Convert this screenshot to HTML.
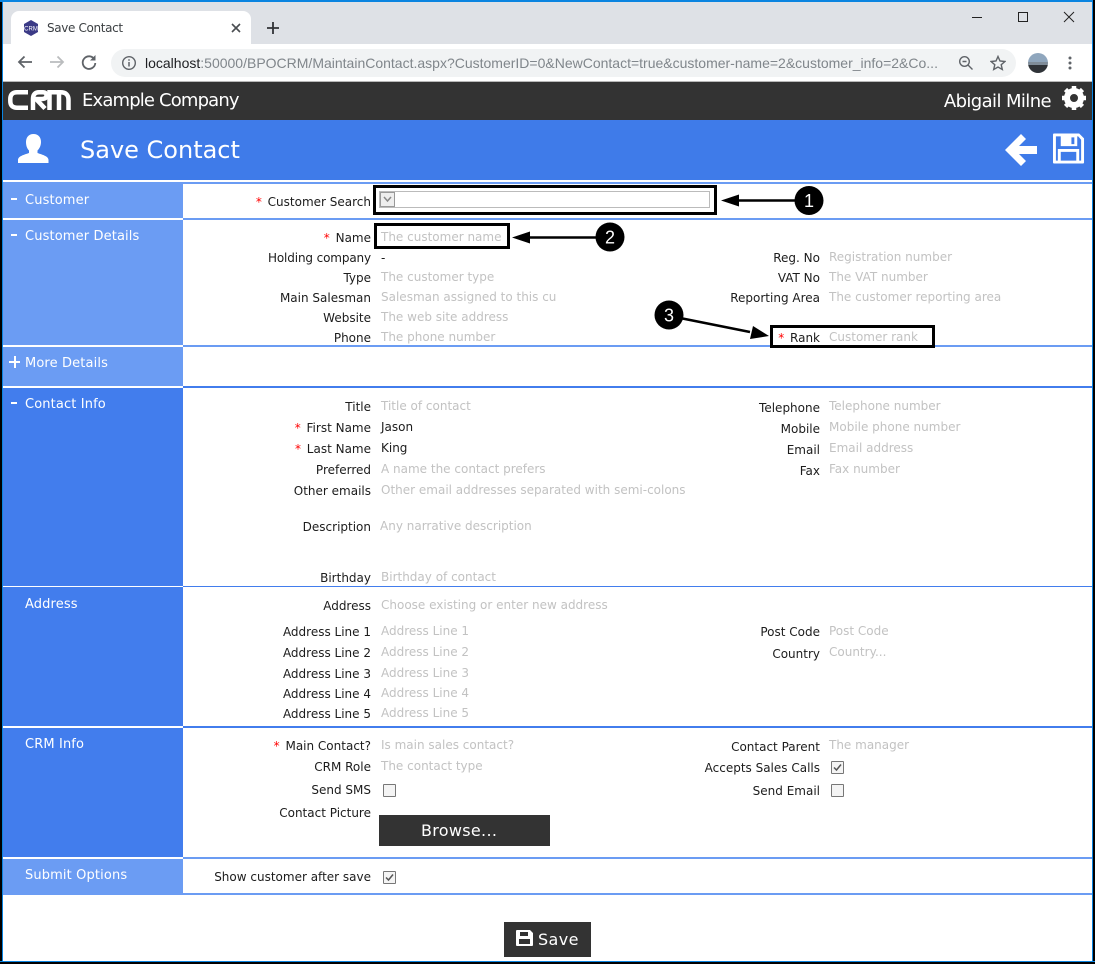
<!DOCTYPE html>
<html><head><meta charset="utf-8"><title>Save Contact</title>
<style>
html,body{margin:0;padding:0;background:#fff}
#p{position:relative;width:1095px;height:964px;overflow:hidden;background:#fff;font-family:"DejaVu Sans","Liberation Sans",sans-serif;font-size:12px;color:#1c1c1c}
#p div,#p span.a,#p svg{position:absolute}
.l{right:724px;margin-top:1px;height:16px;line-height:16px;white-space:nowrap;text-align:right;color:#1c1c1c}
.r{right:275px;margin-top:1px;height:16px;line-height:16px;white-space:nowrap;text-align:right;color:#1c1c1c}
.v{left:381px;margin-top:1px;height:16px;line-height:16px;white-space:nowrap;color:#c2c2c2}
.w{left:829px;margin-top:1px;height:16px;line-height:16px;white-space:nowrap;color:#c2c2c2}
.k{color:#1c1c1c}
i{font-style:normal;color:#f00;margin-right:2px}
.s{left:3px;width:180px}
.d{background:#427ded}.e{background:#6b9cf3}
.t{left:25px;margin-top:2px;color:#fff;font-size:13px;letter-spacing:.13px;height:16px;line-height:16px;white-space:nowrap}
.h{left:183px;right:3px;height:2px}
.bx{width:11px;height:11px;border:1px solid #777;background:#f4f4f4;border-radius:1px}
.m{left:11px;width:6px;height:2px;background:#fff}
.box{border:3px solid #000;box-sizing:border-box}
</style></head><body><div id="p">
<!-- chrome -->
<div style="left:0;top:0;width:1095px;height:44px;background:#dee1e6"></div>
<div style="left:11px;top:11px;width:240px;height:34px;background:#fff;border-radius:8px 8px 0 0"></div>
<svg style="left:22px;top:19px" width="18" height="18" viewBox="0 0 18 18"><path d="M9 1l7 4v8l-7 4-7-4V5z" fill="#3b3a86"/><text x="9" y="11.500" font-size="6" fill="#fff" text-anchor="middle" font-family="Liberation Sans">CRM</text></svg>
<div style="left:47px;top:20px;font:12px/16px 'DejaVu Sans',sans-serif;letter-spacing:-.35px;color:#3c4043;white-space:nowrap">Save Contact</div>
<svg style="left:230px;top:22px" width="12" height="12" viewBox="0 0 12 12"><path d="M2 2l8 8M10 2l-8 8" stroke="#4a4d51" stroke-width="1.600"/></svg>
<svg style="left:266px;top:21px" width="14" height="14" viewBox="0 0 14 14"><path d="M7 1v12M1 7h12" stroke="#303236" stroke-width="1.800"/></svg>
<svg style="left:972px;top:11px" width="104" height="12" viewBox="0 0 104 12"><path d="M0 6.500h10" stroke="#222" stroke-width="1"/><rect x="46.500" y="1.500" width="9" height="9" fill="none" stroke="#222"/><path d="M92 1l10 10M102 1l-10 10" stroke="#222" stroke-width="1"/></svg>
<div style="left:0;top:44px;width:1095px;height:37px;background:#fff"></div>
<div style="left:0;top:81px;width:1095px;height:1px;background:#b8b8b8"></div>
<svg style="left:16px;top:53px" width="18" height="18" viewBox="0 0 18 18"><path d="M16 9H3M8.500 3.500L3 9l5.500 5.500" fill="none" stroke="#5f6368" stroke-width="1.800"/></svg>
<svg style="left:48px;top:53px" width="18" height="18" viewBox="0 0 18 18"><path d="M2 9h13M9.500 3.500L15 9l-5.500 5.500" fill="none" stroke="#babcbe" stroke-width="1.800"/></svg>
<svg style="left:80px;top:53px" width="18" height="18" viewBox="0 0 18 18"><path d="M14.500 6.500A6.300 6.300 0 1 0 15.300 10" fill="none" stroke="#5f6368" stroke-width="1.800"/><path d="M15.500 2v5.500H10z" fill="#5f6368"/></svg>
<div style="left:111px;top:49px;width:905px;height:28px;border-radius:14px;background:#f1f3f4"></div>
<svg style="left:121px;top:55px" width="16" height="16" viewBox="0 0 16 16"><circle cx="8" cy="8" r="6.300" fill="none" stroke="#5f6368" stroke-width="1.400"/><path d="M8 7v4.500M8 4.300v1.500" stroke="#5f6368" stroke-width="1.500"/></svg>
<div style="left:145px;top:54px;font:14px/18px 'Liberation Sans',sans-serif;letter-spacing:0;color:#80868b;white-space:nowrap"><span style="color:#202124">localhost</span>:50000/BPOCRM/MaintainContact.aspx?CustomerID=0&amp;NewContact=true&amp;customer-name=2&amp;customer_info=2&amp;Co...</div>
<svg style="left:958px;top:55px" width="16" height="16" viewBox="0 0 16 16"><circle cx="6.500" cy="6.500" r="4.800" fill="none" stroke="#5f6368" stroke-width="1.400"/><path d="M10 10l4.500 4.500M4.500 6.500h4" stroke="#5f6368" stroke-width="1.400"/></svg>
<svg style="left:990px;top:55px" width="16" height="16" viewBox="0 0 16 16"><path d="M8 1.500l2 4.500 4.900.5-3.700 3.200 1.100 4.800L8 12l-4.300 2.500 1.100-4.800L1.100 6.500 6 6z" fill="none" stroke="#5f6368" stroke-width="1.400"/></svg>
<svg style="left:1028px;top:53px" width="20" height="20" viewBox="0 0 20 20"><defs><clipPath id="c"><circle cx="10" cy="10" r="10"/></clipPath></defs><g clip-path="url(#c)"><rect width="20" height="9" fill="#8fa6bd"/><rect y="9" width="20" height="3" fill="#7f8c99"/><rect y="12" width="20" height="8" fill="#2f3338"/></g></svg>
<svg style="left:1067px;top:55px" width="6" height="16" viewBox="0 0 6 16"><circle cx="3" cy="3" r="1.500" fill="#5f6368"/><circle cx="3" cy="8" r="1.500" fill="#5f6368"/><circle cx="3" cy="13" r="1.500" fill="#5f6368"/></svg>
<!-- dark header -->
<div style="left:0;top:82px;width:1095px;height:38px;background:#333"></div>
<svg style="left:8px;top:90px" width="63" height="20" viewBox="0 0 63 20"><g fill="none" stroke="#fff" stroke-width="4.500"><path d="M20 2.300H9Q2.300 2.300 2.300 9v2Q2.300 17.700 9 17.700h11"/><path d="M25 20V9q0-6.700 6-6.700h4q3.500 0 3.500 3.200T34 9h-6l9 9.500"/><path d="M41.500 20V2.300h11q8 0 8 7.700v10M51 2.300V20"/></g></svg>
<div style="left:82px;top:89px;font-size:18px;line-height:24px;color:#fff;white-space:nowrap;letter-spacing:-.85px">Example Company</div>
<div style="right:44px;top:90px;font-size:18px;line-height:24px;color:#fff;white-space:nowrap;letter-spacing:-.6px">Abigail Milne</div>
<svg style="left:1061px;top:85px" width="26" height="26" viewBox="0 0 26 26"><circle cx="13" cy="13" r="7" fill="none" stroke="#fff" stroke-width="6"/><path d="M13 1v24M1 13h24M4.500 4.500l17 17M21.500 4.500l-17 17" stroke="#fff" stroke-width="4.500" stroke-dasharray="4.500 15 4.500"/></svg>
<!-- blue title -->
<div style="left:0;top:120px;width:1095px;height:60px;background:#3f7be9"></div>
<svg style="left:18px;top:134px" width="31" height="29" viewBox="0 0 31 29"><path d="M15.500 0c5 0 7.500 3.500 7.500 8 0 3.500-1.500 6.500-3.500 8.500v2.500c4 1.500 11 3 11 7V29H0v-3c0-4 7-5.500 11-7v-2.500C9 14.500 8 11.500 8 8c0-4.500 2.500-8 7.500-8z" fill="#fff"/></svg>
<div style="left:80px;top:134px;font-size:24px;line-height:32px;color:#fff;white-space:nowrap">Save Contact</div>
<svg style="left:1005px;top:134px" width="32" height="32" viewBox="0 0 32 32"><path d="M16 0l5 5-7 7h18v8H14l7 7-5 5L0 16z" fill="#fff"/></svg>
<svg style="left:1053px;top:133px" width="32" height="31" viewBox="0 0 33 31"><path fill-rule="evenodd" d="M1 0h26l5 5v25a1 1 0 0 1-1 1H1a1 1 0 0 1-1-1V1a1 1 0 0 1 1-1zM3 3v25h2V16h22v12h2V6.500L26 3h-1v10H8V3zM8 19v9h16v-9zM19 4v7h3V4z" fill="#fff"/></svg>
<!-- frame -->
<div style="left:0;top:0;width:2px;height:964px;background:#000;z-index:9"></div>
<div style="left:2px;top:0;width:1px;height:964px;background:#0a84e0;z-index:9"></div>
<div style="left:0;top:0;width:1095px;height:2px;background:#0a84e0;z-index:9"></div>
<div style="right:0;top:0;width:2px;height:964px;background:#000;z-index:9"></div>
<div style="right:2px;top:0;width:1px;height:964px;background:#0a84e0;z-index:9"></div>
<div style="left:0;top:962px;width:1095px;height:2px;background:#000;z-index:9"></div>
<div style="left:0;top:961px;width:1095px;height:1px;background:#0a84e0;z-index:9"></div>
<!-- section lines -->
<div style="left:3px;right:3px;top:182px;height:2px;background:#6b9cf3"></div>
<div class="h e" style="top:218px"></div>
<div class="h e" style="top:345px"></div>
<div class="h d" style="top:386px"></div>
<div class="h d" style="top:586px;height:1px"></div>
<div class="h d" style="top:726px"></div>
<div class="h e" style="top:857px"></div>
<div class="h e" style="top:893px"></div>
<!-- left blocks -->
<div class="s e" style="top:184px;height:34px"></div>
<div class="s e" style="top:220px;height:125px"></div>
<div class="s e" style="top:347px;height:39px"></div>
<div class="s d" style="top:388px;height:198px"></div>
<div class="s d" style="top:587px;height:139px"></div>
<div class="s d" style="top:728px;height:129px"></div>
<div class="s e" style="top:859px;height:36px"></div>
<div class="m" style="top:198px"></div><div class="t" style="top:191px">Customer</div>
<div class="m" style="top:234px"></div><div class="t" style="top:227px">Customer Details</div>
<div class="m" style="top:361px;width:11px;left:9px"></div><div class="m" style="left:13.500px;top:356px;width:2px;height:12px"></div><div class="t" style="top:354px">More Details</div>
<div class="m" style="top:402px"></div><div class="t" style="top:395px">Contact Info</div>
<div class="t" style="top:595px">Address</div>
<div class="t" style="top:735px">CRM Info</div>
<div class="t" style="top:866px">Submit Options</div>
<!-- customer -->
<div class="l" style="top:193px"><i>*</i> Customer Search</div>
<div style="left:379px;top:191px;width:331px;height:17px;border:1px solid #bbb;box-sizing:border-box"></div>
<div style="left:380px;top:192px;width:15px;height:15px;background:#eee;border:1px solid #999;box-sizing:border-box"></div>
<svg style="left:383px;top:196px" width="9" height="7" viewBox="0 0 9 7"><path d="M1 1l3.500 4L8 1" fill="none" stroke="#888" stroke-width="1.500"/></svg>
<!-- details -->
<div class="l" style="top:229px"><i>*</i> Name</div><div class="v" style="top:228px">The customer name</div>
<div class="l" style="top:249px;letter-spacing:-.13px">Holding company</div><div class="v k" style="top:249px">-</div>
<div class="l" style="top:269px">Type</div><div class="v" style="top:268px">The customer type</div>
<div class="l" style="top:289px">Main Salesman</div><div class="v" style="top:288px">Salesman assigned to this cu</div>
<div class="l" style="top:309px">Website</div><div class="v" style="top:308px">The web site address</div>
<div class="l" style="top:329px">Phone</div><div class="v" style="top:328px">The phone number</div>
<div class="r" style="top:249px">Reg. No</div><div class="w" style="top:248px">Registration number</div>
<div class="r" style="top:269px">VAT No</div><div class="w" style="top:268px">The VAT number</div>
<div class="r" style="top:289px">Reporting Area</div><div class="w" style="top:288px">The customer reporting area</div>
<div class="r" style="top:329px"><i>*</i> Rank</div><div class="w" style="top:328px">Customer rank</div>
<!-- contact -->
<div class="l" style="top:398px">Title</div><div class="v" style="top:397px">Title of contact</div>
<div class="l" style="top:419px"><i>*</i> First Name</div><div class="v k" style="top:418px">Jason</div>
<div class="l" style="top:440px"><i>*</i> Last Name</div><div class="v k" style="top:439px">King</div>
<div class="l" style="top:461px">Preferred</div><div class="v" style="top:460px">A name the contact prefers</div>
<div class="l" style="top:482px">Other emails</div><div class="v" style="top:481px">Other email addresses separated with semi-colons</div>
<div class="l" style="top:518px">Description</div><div class="v" style="top:517px;left:380px">Any narrative description</div>
<div class="l" style="top:569px">Birthday</div><div class="v" style="top:568px">Birthday of contact</div>
<div class="r" style="top:399px">Telephone</div><div class="w" style="top:397px">Telephone number</div>
<div class="r" style="top:420px">Mobile</div><div class="w" style="top:418px">Mobile phone number</div>
<div class="r" style="top:441px">Email</div><div class="w" style="top:439px">Email address</div>
<div class="r" style="top:462px">Fax</div><div class="w" style="top:460px">Fax number</div>
<!-- address -->
<div class="l" style="top:597px">Address</div><div class="v" style="top:596px">Choose existing or enter new address</div>
<div class="l" style="top:623px">Address Line 1</div><div class="v" style="top:622px">Address Line 1</div>
<div class="l" style="top:644px">Address Line 2</div><div class="v" style="top:643px">Address Line 2</div>
<div class="l" style="top:665px">Address Line 3</div><div class="v" style="top:664px">Address Line 3</div>
<div class="l" style="top:685px">Address Line 4</div><div class="v" style="top:684px">Address Line 4</div>
<div class="l" style="top:705px">Address Line 5</div><div class="v" style="top:704px">Address Line 5</div>
<div class="r" style="top:623px">Post Code</div><div class="w" style="top:622px">Post Code</div>
<div class="r" style="top:645px">Country</div><div class="w" style="top:643px">Country...</div>
<!-- crm -->
<div class="l" style="top:737px"><i>*</i> Main Contact?</div><div class="v" style="top:736px">Is main sales contact?</div>
<div class="l" style="top:758px">CRM Role</div><div class="v" style="top:757px">The contact type</div>
<div class="l" style="top:781px">Send SMS</div><div class="bx" style="left:383px;top:784px"></div>
<div class="l" style="top:804px">Contact Picture</div>
<div style="left:379px;top:815px;width:171px;height:31px;background:#333;color:#fff;font-size:16px;letter-spacing:.3px;line-height:31px;white-space:nowrap"><span style="margin-left:42px">Browse...</span></div>
<div class="r" style="top:738px">Contact Parent</div><div class="w" style="top:736px">The manager</div>
<div class="r" style="top:759px">Accepts Sales Calls</div><div class="bx" style="left:831px;top:761px"></div>
<svg style="left:832px;top:762px" width="11" height="11" viewBox="0 0 11 11"><path d="M2 5.500l2.500 2.500L9 2.500" fill="none" stroke="#555" stroke-width="1.500"/></svg>
<div class="r" style="top:782px">Send Email</div><div class="bx" style="left:831px;top:784px"></div>
<!-- submit -->
<div class="l" style="top:868px">Show customer after save</div><div class="bx" style="left:383px;top:871px"></div>
<svg style="left:384px;top:872px" width="11" height="11" viewBox="0 0 11 11"><path d="M2 5.500l2.500 2.500L9 2.500" fill="none" stroke="#555" stroke-width="1.500"/></svg>
<div style="left:504px;top:922px;width:87px;height:35px;background:#333"></div>
<svg style="left:516px;top:930px" width="17" height="16" viewBox="0 0 17 16"><path fill-rule="evenodd" d="M1 0h13l3 3v12a1 1 0 0 1-1 1H1a1 1 0 0 1-1-1V1a1 1 0 0 1 1-1zM4 2v4h8V2zM3 9v5h11V9z" fill="#fff"/></svg>
<div style="left:538px;top:930px;font-size:16px;letter-spacing:.4px;line-height:20px;color:#fff;white-space:nowrap">Save</div>
<!-- annotations -->
<div class="box" style="left:373px;top:185px;width:344px;height:30px;z-index:5"></div>
<div class="box" style="left:374px;top:223px;width:136px;height:26px;z-index:5"></div>
<div class="box" style="left:770px;top:325px;width:165px;height:23px;z-index:5"></div>
<svg style="left:0;top:0;z-index:6" width="1095" height="964" viewBox="0 0 1095 964">
<path d="M738 200.500h62" stroke="#000" stroke-width="2.500"/><path d="M721 200.500l18-6v12z" fill="#000"/>
<path d="M530 237.500h70" stroke="#000" stroke-width="2.500"/><path d="M512 237.500l18-6v12z" fill="#000"/>
<path d="M680 318l70 14" stroke="#000" stroke-width="2.500"/><path d="M769 336l-19 3 3-13z" fill="#000"/>
<circle cx="809" cy="200.500" r="14.500" fill="#000"/><circle cx="610" cy="237" r="14.500" fill="#000"/><circle cx="669" cy="315" r="14.500" fill="#000"/>
<text x="809" y="207" fill="#fff" font-size="18" text-anchor="middle" font-family="Liberation Sans">1</text>
<text x="610" y="243.500" fill="#fff" font-size="18" text-anchor="middle" font-family="Liberation Sans">2</text>
<text x="669" y="321.500" fill="#fff" font-size="18" text-anchor="middle" font-family="Liberation Sans">3</text>
</svg>
</div></body></html>
